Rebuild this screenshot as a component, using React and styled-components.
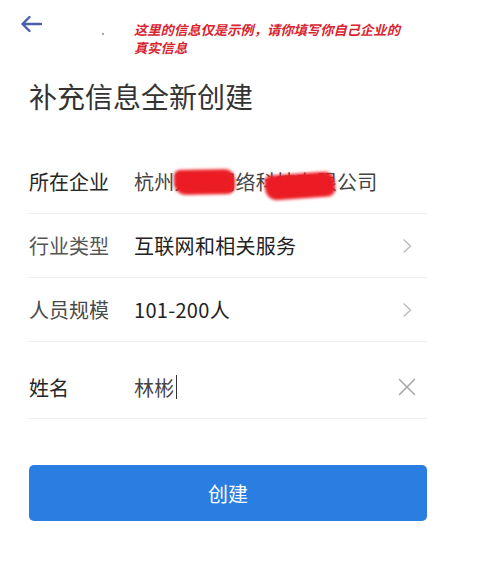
import React from 'react'
import styled, { createGlobalStyle } from 'styled-components'

const GlobalStyle = createGlobalStyle`
  body {
    margin: 0;
    background: #ffffff;
    font-family: 'Noto Sans CJK SC', 'Noto Sans', sans-serif;
  }
`

const rows = [
  { label: '所在企业', value: '杭州某某网络科技有限公司', labelTone: '#262626', valueTone: '#444', redacted: true },
  { label: '行业类型', value: '互联网和相关服务', labelTone: '#555', valueTone: '#222', action: 'more' },
  { label: '人员规模', value: '101-200人', labelTone: '#4a4a4a', valueTone: '#222', action: 'more' },
  { label: '姓名', value: '林彬', labelTone: '#262626', valueTone: '#444', action: 'clear', tall: true, editing: true },
]

export default function App() {
  return (
    <Page>
      <GlobalStyle />
      <Header>
        <BackButton aria-label="返回">
          <svg width="22" height="18" viewBox="0 0 22 18" fill="none">
            <path d="M21 9H2.5M9.5 2L2.5 9L9.5 16" stroke="#4b5ea8" strokeWidth="2.4" strokeLinecap="round" strokeLinejoin="round" />
          </svg>
        </BackButton>
        <Speck />
        <Notice>
          这里的信息仅是示例，请你填写你自己企业的
          <br />
          真实信息
        </Notice>
      </Header>

      <Title>补充信息全新创建</Title>

      <Form>
        {rows.map(row => (
          <Row key={row.label} tall={row.tall}>
            <Label tone={row.labelTone}>{row.label}</Label>
            <Value tone={row.valueTone}>
              {row.value}
              {row.editing && <Caret />}
              {row.redacted && (
                <>
                  <Scribble left={40} shift={0} width={61} tilt={-1} />
                  <Scribble left={131} shift={4} width={70} tilt={-4} />
                </>
              )}
            </Value>
            {row.action === 'more' && (
              <Trailing>
                <svg width="9" height="14" viewBox="0 0 9 14" fill="none">
                  <path d="M1.2 1L7.5 7L1.2 13" stroke="#bdbdbd" strokeWidth="1.5" strokeLinecap="round" strokeLinejoin="round" />
                </svg>
              </Trailing>
            )}
            {row.action === 'clear' && (
              <Trailing>
                <svg width="18" height="18" viewBox="0 0 18 18" fill="none">
                  <path d="M1.5 1.5L16.5 16.5M16.5 1.5L1.5 16.5" stroke="#a8a8a8" strokeWidth="1.6" strokeLinecap="round" />
                </svg>
              </Trailing>
            )}
          </Row>
        ))}
      </Form>

      <SubmitButton>创建</SubmitButton>
    </Page>
  )
}

const Page = styled.div`
  width: 494px;
  min-height: 562px;
  padding: 0 67px 0 28px;
  box-sizing: border-box;
  background: #fff;
`

const Header = styled.div`
  display: flex;
  align-items: flex-start;
  height: 62px;
  padding-top: 14px;
  margin-left: -8px;
  box-sizing: border-box;
`

const BackButton = styled.button`
  display: flex;
  align-items: center;
  justify-content: center;
  width: 22px;
  height: 20px;
  padding: 0;
  border: none;
  background: transparent;
`

const Speck = styled.span`
  width: 2px;
  height: 2px;
  margin: 19px 0 0 60px;
  border-radius: 50%;
  background: #888;
`

const Notice = styled.p`
  margin: 7px 0 0 30px;
  font-size: 13.3px;
  line-height: 18px;
  font-weight: 700;
  font-style: italic;
  color: #d9232f;
`

const Title = styled.h1`
  margin: 16px 0 0 1px;
  font-size: 28px;
  line-height: 36px;
  font-weight: 400;
  color: #333;
`

const Form = styled.div`
  margin-top: 36px;
  display: flex;
  flex-direction: column;
`

const Row = styled.div`
  display: flex;
  align-items: center;
  height: ${p => (p.tall ? '77px' : '64px')};
  padding-top: ${p => (p.tall ? '14px' : '0')};
  box-sizing: border-box;
  border-bottom: 1px solid #eeeeee;
`

const Label = styled.span`
  width: 105px;
  padding-left: 1px;
  flex-shrink: 0;
  font-size: 20px;
  color: ${p => p.tone};
`

const Value = styled.span`
  position: relative;
  flex: 1;
  display: flex;
  align-items: center;
  font-size: 20px;
  letter-spacing: 0.3px;
  color: ${p => p.tone};
`

const Caret = styled.span`
  width: 1.5px;
  height: 24px;
  margin-left: 1px;
  background: #333;
`

const Scribble = styled.span`
  position: absolute;
  left: ${p => p.left}px;
  top: 50%;
  width: ${p => p.width}px;
  height: 25px;
  border-radius: 6px 10px 8px 12px;
  background: #ec1c24;
  filter: blur(1.5px);
  transform: translateY(calc(-50% + ${p => p.shift}px)) rotate(${p => p.tilt}deg);
`

const Trailing = styled.span`
  display: flex;
  align-items: center;
  justify-content: center;
  width: 20px;
  margin-right: 10px;
`

const SubmitButton = styled.button`
  display: block;
  width: 398px;
  height: 56px;
  margin: 46px 0 0 1px;
  border: none;
  border-radius: 5px;
  background: #2a7de1;
  color: #fff;
  font-family: inherit;
  font-size: 20px;
`
